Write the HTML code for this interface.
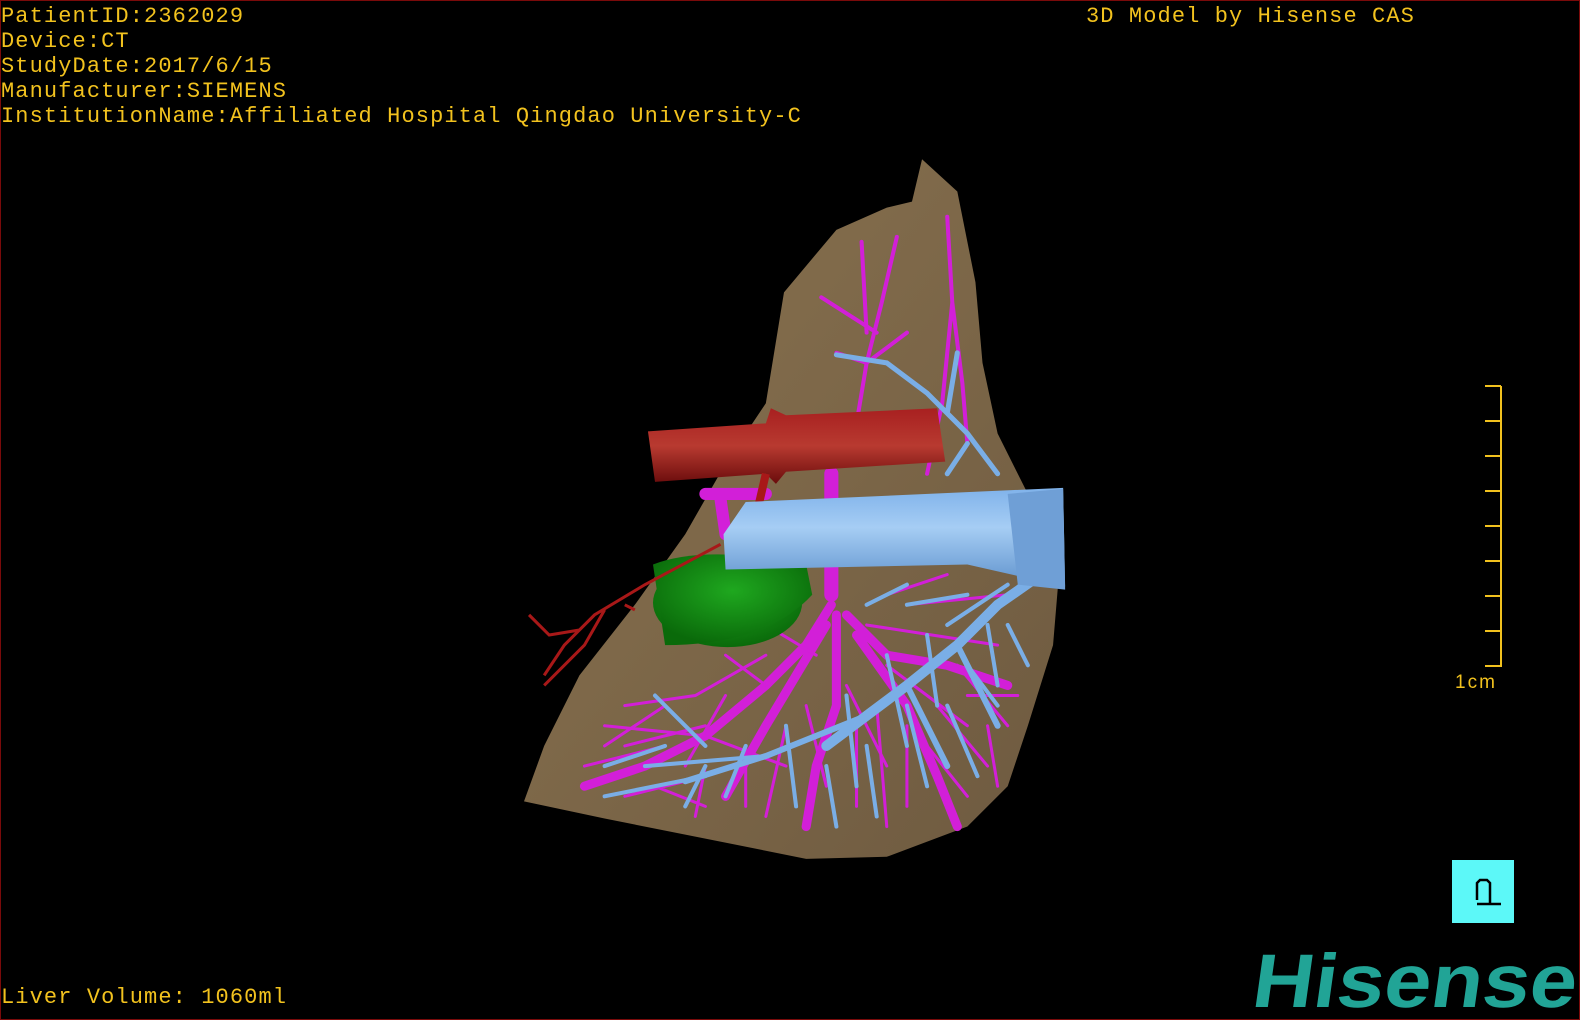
<!DOCTYPE html>
<html><head><meta charset="utf-8"><style>
html,body{margin:0;padding:0;background:#000;}
body{width:1580px;height:1020px;position:relative;overflow:hidden;}
.frame{position:absolute;left:0;top:0;width:1578px;height:1018px;border:1px solid #7a0a0a;}
.t{position:absolute;font-family:"Liberation Mono",monospace;font-size:22px;color:#f2c21e;line-height:25px;white-space:pre;letter-spacing:1.1px;}
svg{position:absolute;left:0;top:0;}
</style></head><body>
<svg width="1580" height="1020" viewBox="0 0 1580 1020">
<g transform="scale(1.0077,1.008)">
<defs>
<linearGradient id="lv" x1="0" y1="0" x2="1" y2="1"><stop offset="0" stop-color="#8a7350"/><stop offset="1" stop-color="#6e5a40"/></linearGradient>
<linearGradient id="rd" x1="0" y1="0" x2="0" y2="1"><stop offset="0" stop-color="#a82020"/><stop offset="0.5" stop-color="#b83a30"/><stop offset="1" stop-color="#6a0c0c"/></linearGradient>
<linearGradient id="bl" x1="0" y1="0" x2="0" y2="1"><stop offset="0" stop-color="#7fb2ea"/><stop offset="0.4" stop-color="#a6cdf4"/><stop offset="1" stop-color="#5f92cc"/></linearGradient>
<radialGradient id="gr" cx="0.5" cy="0.4" r="0.6"><stop offset="0" stop-color="#1fa81f"/><stop offset="1" stop-color="#0a6a0a"/></radialGradient>
</defs>
<path fill="url(#lv)" d="M915,158 L950,190 L968,280 L975,360 L990,430 L1020,490 L1050,580 L1045,640 L1020,720 L1000,780 L960,820 L880,850 L800,852 L700,832 L600,812 L520,795 L540,740 L575,670 L630,600 L680,530 L720,460 L760,400 L778,290 L830,228 L880,206 L905,200 Z"/>
<g stroke="#d21fd8" fill="none" stroke-linecap="round">
<path stroke-width="4" d="M940,215 L945,300 L935,400 L920,470 M945,300 L955,380 L960,440 M890,235 L875,300 L860,360 L850,420 M855,240 L860,330 M815,295 L870,330 M830,350 L860,360 L900,330 M780,415 L850,420"/>
<path stroke-width="14" d="M825,470 L825,590"/>
<path stroke-width="9" d="M825,600 L800,640 L760,680 L700,730 L640,760 L580,780 M840,610 L880,650 L940,660 L1000,680 M830,610 L830,700 L810,760 L800,820 M850,630 L900,700 L930,770 L950,820 M820,620 L760,720 L720,790"/>
<path stroke-width="3" d="M600,720 L700,730 L780,760 M580,760 L660,740 M650,780 L700,800 M620,700 L690,690 L760,650 M900,600 L1000,590 M880,590 L940,570 M860,620 L990,640 M950,660 L1000,720 M930,700 L980,760 M960,690 L1010,690 M900,720 L900,800 M870,700 L880,820 M850,720 L850,800 M780,720 L760,810 M740,740 L740,800 M700,760 L690,810 M840,680 L880,760 M760,680 L720,650 M800,700 L820,780 M980,720 L990,780 M920,740 L960,790 M620,790 L700,770 M660,700 L600,740 M880,660 L960,720 M810,650 L760,620 M700,720 L620,740 M720,690 L680,760"/>
<path stroke-width="12" d="M700,490 L760,490 M715,495 L720,530"/>
</g>
<g stroke="#7aaee6" fill="none" stroke-linecap="round">
<path stroke-width="5" d="M830,352 L880,360 L920,390 L960,430 L990,470 M940,410 L950,350 M960,440 L940,470"/>
<path stroke-width="10" d="M1040,565 L990,600 L950,640 L900,680 L860,710 L820,740"/>
<path stroke-width="6" d="M860,710 L760,750 L680,775 M900,680 L940,760 M950,640 L990,720"/>
<path stroke-width="4" d="M1000,580 L940,620 M960,590 L900,600 M920,630 L930,700 M880,650 L900,740 M840,690 L850,780 M780,720 L790,800 M740,740 L720,790 M700,760 L680,800 M980,620 L990,680 M960,660 L990,700 M820,760 L830,820 M900,700 L920,780 M860,740 L870,810 M940,700 L970,770 M600,760 L660,740 M650,690 L700,740 M1000,620 L1020,660 M900,580 L860,600 M760,750 L640,760 M700,770 L600,790"/>
</g>
<ellipse cx="722" cy="598" rx="74" ry="44" fill="url(#gr)"/>
<path d="M648,560 Q700,540 800,560 L806,590 Q760,640 660,640 Z" fill="url(#gr)"/>
<path d="M643,428 L760,420 L765,405 L780,412 L930,405 L938,458 L780,468 L770,480 L760,470 L650,478 Z" fill="url(#rd)"/>
<path d="M760,470 L748,522" stroke="#a81818" stroke-width="8"/>
<path d="M715,540 L640,580 L590,610 L560,640 L540,670 M600,605 L580,640 L555,665 L540,680 M575,625 L545,630 L525,610 M620,600 L630,605" stroke="#a81818" stroke-width="3" fill="none"/>
<path d="M740,498 L1055,484 L1057,582 L960,560 L720,565 L718,530 Z" fill="url(#bl)"/>
<path d="M1000,490 L1055,485 L1057,585 L1010,580 Z" fill="#6f9fd6"/>
</g>
<line x1="1501" y1="386" x2="1501" y2="667" stroke="#f2c21e" stroke-width="2"/>
<path d="M1485,386H1501M1485,421H1501M1485,456H1501M1485,491H1501M1485,526H1501M1485,561H1501M1485,596H1501M1485,631H1501M1485,666H1501" stroke="#f2c21e" stroke-width="2"/>
<text x="1455" y="688" font-family="Liberation Sans, sans-serif" font-size="19" fill="#f2c21e" letter-spacing="2">1cm</text>
<rect x="1452" y="860" width="62" height="63" fill="#5cf8f8"/>
<path d="M1477,900 L1477,883 L1480,880 L1487,880 L1490,883 L1490,903 M1477,904 L1501,904" stroke="#000" stroke-width="2.5" fill="none"/>
<g transform="translate(1250,1007) skewX(-8)">
<text x="0" y="0" font-family="Liberation Sans, sans-serif" font-weight="bold" font-size="76" fill="#21a496" textLength="324" lengthAdjust="spacingAndGlyphs">Hisense</text>
</g>
</svg>
<div class="frame"></div>
<div class="t" style="left:1px;top:4px;">PatientID:2362029
Device:CT
StudyDate:2017/6/15
Manufacturer:SIEMENS
InstitutionName:Affiliated Hospital Qingdao University-C</div>
<div class="t" style="left:1086px;top:4px;">3D Model by Hisense CAS</div>
<div class="t" style="left:1px;top:985px;">Liver Volume: 1060ml</div>
</body></html>
